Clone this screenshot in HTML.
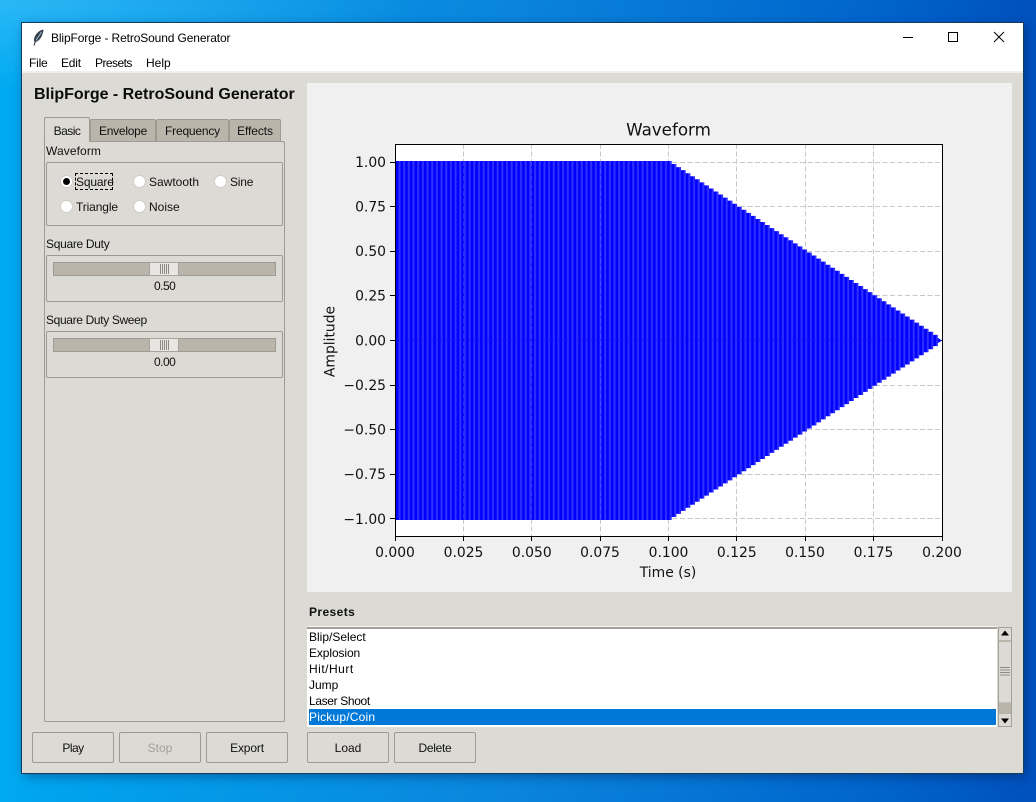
<!DOCTYPE html>
<html><head><meta charset="utf-8">
<style>
html,body{margin:0;padding:0;width:1036px;height:802px;overflow:hidden}
body{position:relative;font-family:"Liberation Sans",sans-serif;font-size:12px;color:#000;
background:linear-gradient(90deg,#00aaf2 0%,#00a4ee 4%,#0a84dc 50%,#0064cc 85%,#0050bd 100%)}
div{position:absolute;box-sizing:border-box}
.t{white-space:nowrap;line-height:14px;height:14px}
.win{left:22px;top:23px;width:1001px;height:750px;background:#dcdad5;box-shadow:0 0 0 1px #123e60,2px 3px 10px rgba(0,20,60,.45)}
.tab{top:119px;height:22px;background:#b9b5aa;border:1px solid #9e9a91;border-bottom:none;border-radius:2px 2px 0 0;text-align:center;line-height:23px;color:#111}
.frame{left:46px;width:237px;border:1px solid #9e9a91;border-radius:2px;background:#dcdad5}
.trough{left:53px;width:223px;height:14px;background:#bab5ab;border:1px solid #9e9a91}
.handle{left:149px;width:30px;height:14px;background:#e8e6e2;border:1px solid #a8a49b}
.grip{left:10px;top:1px;width:9px;height:10px;background:repeating-linear-gradient(90deg,#8e8a82 0 1px,#e8e6e2 1px 2px)}
.radio{width:13px;height:13px;border-radius:50%;background:#fff;border:1px solid #d0cdc6}
.btn{top:732px;width:82px;height:31px;background:#dcdad5;border:1px solid #9e9a91;border-radius:2px;text-align:center;line-height:30px;color:#111}
.li{left:309px;width:687px;height:16px;line-height:16px;white-space:nowrap;color:#000}
</style></head>
<body>
<div style="left:0;top:0;width:1036px;height:802px;background:radial-gradient(ellipse 400px 90px at 20px 0,rgba(120,210,255,.35),transparent)"></div>
<div class="win"></div>
<div style="left:22px;top:23px;width:1001px;height:49px;background:#fff"></div>
<div style="left:22px;top:71px;width:1001px;height:2px;background:#f0efec"></div>

<svg style="position:absolute;left:32px;top:29px" width="13" height="17" viewBox="0 0 13 17">
<path d="M11.500 0.500C7.500 1 3 5 2 10C1.700 11.800 2.300 13 3.500 13C7.500 12 11 7 11.500 0.500Z" fill="#33404e"/>
<path d="M9.500 3L4 11.500" stroke="#b8c8d6" stroke-width=".9"/>
<path d="M3.500 12L2 16.500" stroke="#222" stroke-width="1"/>
</svg>
<div class="t" style="left:51px;top:31px;letter-spacing:-.125px">BlipForge - RetroSound Generator</div>

<svg style="position:absolute;left:900px;top:28px" width="110" height="20" viewBox="0 0 110 20">
<path d="M3 9.500H13" stroke="#000" stroke-width="1"/>
<rect x="48.500" y="4.500" width="9" height="9" fill="none" stroke="#000" stroke-width="1"/>
<path d="M94 4L104 14M104 4L94 14" stroke="#000" stroke-width="1"/>
</svg>

<div class="t" style="left:29px;top:56px;letter-spacing:-.2px">File</div>
<div class="t" style="left:61px;top:56px;letter-spacing:-.2px">Edit</div>
<div class="t" style="left:95px;top:56px;letter-spacing:-.55px">Presets</div>
<div class="t" style="left:146px;top:56px">Help</div>

<div class="t" style="left:34px;top:87px;height:16px;line-height:16px;font-size:16px;font-weight:bold;letter-spacing:-.02px;color:#0c0c0c">BlipForge - RetroSound Generator</div>

<div style="left:44px;top:141px;width:241px;height:581px;border:1px solid #9e9a91;border-radius:2px;background:#dcdad5"></div>
<div class="tab" style="left:90px;width:66px;letter-spacing:-.25px">Envelope</div>
<div class="tab" style="left:156px;width:73px;letter-spacing:-.2px">Frequency</div>
<div class="tab" style="left:229px;width:52px;letter-spacing:-.1px">Effects</div>
<div class="tab" style="left:44px;top:117px;width:46px;height:25px;background:#dcdad5;line-height:27px;z-index:2;letter-spacing:-.5px">Basic</div>

<div class="t" style="left:46px;top:144px;color:#111;letter-spacing:.1px">Waveform</div>
<div class="frame" style="top:162px;height:64px"></div>
<div class="radio" style="left:60px;top:175px"></div>
<div style="left:63px;top:178px;width:7px;height:7px;border-radius:50%;background:#000"></div>
<div class="radio" style="left:133px;top:175px"></div>
<div class="radio" style="left:214px;top:175px"></div>
<div class="radio" style="left:60px;top:200px"></div>
<div class="radio" style="left:133px;top:200px"></div>
<div style="left:75px;top:173px;width:38px;height:17px;border:1px dashed #000"></div>
<div class="t" style="left:76px;top:175px;color:#111;letter-spacing:-.15px">Square</div>
<div class="t" style="left:149px;top:175px;color:#111">Sawtooth</div>
<div class="t" style="left:230px;top:175px;color:#111;letter-spacing:-.2px">Sine</div>
<div class="t" style="left:76px;top:200px;color:#111;letter-spacing:-.12px">Triangle</div>
<div class="t" style="left:149px;top:200px;color:#111">Noise</div>

<div class="t" style="left:46px;top:237px;color:#111;letter-spacing:-.3px">Square Duty</div>
<div class="frame" style="top:255px;height:47px"></div>
<div class="trough" style="top:262px"></div>
<div class="handle" style="top:262px"><div class="grip"></div></div>
<div class="t" style="left:154px;top:279px;color:#111;letter-spacing:-.5px">0.50</div>

<div class="t" style="left:46px;top:313px;color:#111;letter-spacing:-.35px">Square Duty Sweep</div>
<div class="frame" style="top:331px;height:47px"></div>
<div class="trough" style="top:338px"></div>
<div class="handle" style="top:338px"><div class="grip"></div></div>
<div class="t" style="left:154px;top:355px;color:#111;letter-spacing:-.5px">0.00</div>

<div class="btn" style="left:32px;letter-spacing:-.5px">Play</div>
<div class="btn" style="left:119px;color:#a3a099">Stop</div>
<div class="btn" style="left:206px;letter-spacing:-.15px">Export</div>
<div class="btn" style="left:307px">Load</div>
<div class="btn" style="left:394px;letter-spacing:-.3px">Delete</div>

<svg style="position:absolute;left:307px;top:83px" width="705" height="509" viewBox="307 83 705 509">
<defs>
<pattern id="st" x="396" y="0" width="4.675" height="10" patternUnits="userSpaceOnUse">
<rect x="0" y="0" width="4.675" height="10" fill="#0000ff"/>
<rect x="2.500" y="0" width="2" height="10" fill="#3030ff"/>
</pattern>
</defs>
<rect x="307" y="83" width="705" height="509" fill="#f0f0f0"/>
<rect x="395" y="144" width="547" height="392" fill="#fff"/>
<g stroke="#c8c8c8" stroke-width="1" stroke-dasharray="5 2.500" fill="none">
<path d="M463.500 144V536M531.500 144V536M600.500 144V536M668.500 144V536M736.500 144V536M805.500 144V536M873.500 144V536"/>
<path d="M395 162.500H942M395 206.500H942M395 251.500H942M395 295.500H942M395 340.500H942M395 385.500H942M395 429.500H942M395 474.500H942M395 518.500H942"/>
</g>
<path id="wv" fill="url(#st)" d="M395 341V161H667
h4.670v3.050h4.670v3.050h4.670v3.050h4.670v3.050h4.670v3.050h4.670v3.050h4.670v3.050h4.670v3.050h4.670v3.050h4.670v3.050
h4.670v3.050h4.670v3.050h4.670v3.050h4.670v3.050h4.670v3.050h4.670v3.050h4.670v3.050h4.670v3.050h4.670v3.050h4.670v3.050
h4.670v3.050h4.670v3.050h4.670v3.050h4.670v3.050h4.670v3.050h4.670v3.050h4.670v3.050h4.670v3.050h4.670v3.050h4.670v3.050
h4.670v3.050h4.670v3.050h4.670v3.050h4.670v3.050h4.670v3.050h4.670v3.050h4.670v3.050h4.670v3.050h4.670v3.050h4.670v3.050
h4.670v3.050h4.670v3.050h4.670v3.050h4.670v3.050h4.670v3.050h4.670v3.050h4.670v3.050h4.670v3.050h4.670v3.050h4.670v3.050
h4.670v3.050h4.670v3.050h4.670v3.050h4.670v3.050h4.670v3.050h4.670v3.050h4.670v3.050h4.670v3.050
L942 340.500V341Z"/>
<use href="#wv" transform="translate(0,681) scale(1,-1)"/>
<g stroke="#a0a0ff" stroke-width="1" stroke-dasharray="5 2.500" opacity=".25" fill="none">
<path d="M463.500 161V519M531.500 161V519M600.500 161V519"/>
</g>
<path d="M396 340.500H942" stroke="#1010e8" stroke-width="1" opacity=".5"/>
<rect x="395.500" y="144.500" width="547" height="392" fill="none" stroke="#000" stroke-width="1"/>
<g stroke="#000" stroke-width="1" fill="none">
<path d="M395.500 536V541M463.500 536V541M531.500 536V541M600.500 536V541M668.500 536V541M736.500 536V541M805.500 536V541M873.500 536V541M942.500 536V541"/>
<path d="M390 162.500H395M390 206.500H395M390 251.500H395M390 295.500H395M390 340.500H395M390 385.500H395M390 429.500H395M390 474.500H395M390 518.500H395"/>
</g>
<g font-family="'DejaVu Sans',sans-serif" font-size="13.900" fill="#111" text-anchor="end">
<text x="386" y="167">1.00</text><text x="386" y="211.500">0.75</text><text x="386" y="256">0.50</text><text x="386" y="300.500">0.25</text><text x="386" y="345.500">0.00</text><text x="386" y="390">−0.25</text><text x="386" y="434.500">−0.50</text><text x="386" y="479">−0.75</text><text x="386" y="524">−1.00</text>
</g>
<g font-family="'DejaVu Sans',sans-serif" font-size="13.900" fill="#111" text-anchor="middle">
<text x="395" y="557">0.000</text><text x="463.500" y="557">0.025</text><text x="531.800" y="557">0.050</text><text x="600" y="557">0.075</text><text x="668.500" y="557">0.100</text><text x="736.800" y="557">0.125</text><text x="805" y="557">0.150</text><text x="873.500" y="557">0.175</text><text x="942" y="557">0.200</text>
<text x="668" y="577">Time (s)</text>
<text x="668.500" y="135.500" font-size="16.700">Waveform</text>
<text transform="translate(334.500,341.500) rotate(-90)">Amplitude</text>
</g>
</svg>

<div class="t" style="left:309px;top:605px;font-weight:bold;color:#111;letter-spacing:.4px">Presets</div>

<div style="left:307px;top:627px;width:690px;height:100px;background:#fff;border-top:2px solid #a3a098;box-shadow:0 -1px 0 #f4f3f0"></div>
<div class="li" style="top:629px">Blip/Select</div>
<div class="li" style="top:645px;letter-spacing:-.1px">Explosion</div>
<div class="li" style="top:661px;letter-spacing:.5px">Hit/Hurt</div>
<div class="li" style="top:677px">Jump</div>
<div class="li" style="top:693px;letter-spacing:-.35px">Laser Shoot</div>
<div class="li" style="top:709px;background:#0078d7;color:#fff;letter-spacing:.2px">Pickup/Coin</div>

<div style="left:998px;top:627px;width:14px;height:100px;background:#bab5ab;border:1px solid #a3a098"></div>
<div style="left:999px;top:628px;width:12px;height:12px;background:#dcdad5"></div>
<div style="left:999px;top:642px;width:12px;height:61px;background:#dcdad5;border-bottom:1px solid #c4c1ba"></div>
<div style="left:1000px;top:667px;width:10px;height:10px;background:repeating-linear-gradient(180deg,#8e8a82 0 1px,#dcdad5 1px 2.500px)"></div>
<div style="left:999px;top:714px;width:12px;height:12px;background:#dcdad5"></div>
<svg style="position:absolute;left:998px;top:627px" width="14" height="100" viewBox="0 0 14 100">
<path d="M7 3.500L11 8.500H3Z" fill="#000"/><path d="M3 91.500H11L7 96.500Z" fill="#000"/>
</svg>
</body></html>
